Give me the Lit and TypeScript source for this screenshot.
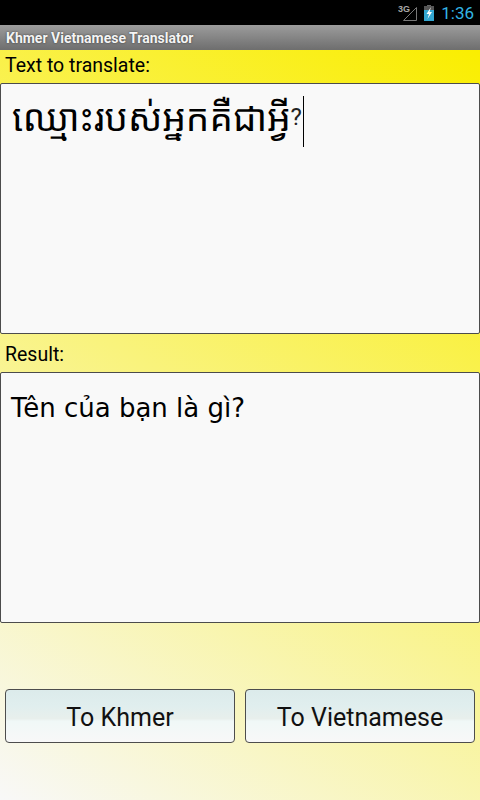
import { LitElement, html, css } from "lit";
import { customElement } from "lit/decorators.js";

@customElement("app-root")
export class AppRoot extends LitElement {
  static styles = css`
    :host {
      display: flex;
      flex-direction: column;
      width: 480px;
      height: 800px;
      overflow: hidden;
      font-family: Roboto, "Noto Sans", sans-serif;
      color: #000;
    }
    .status {
      height: 25px;
      flex: none;
      background: #000;
      display: flex;
      align-items: center;
      justify-content: flex-end;
      gap: 7px;
      padding-right: 6px;
      box-sizing: border-box;
      color: #33b5e5;
      font-size: 17px;
    }
    .status svg { display: block; }
    .title {
      height: 25px;
      flex: none;
      box-sizing: border-box;
      background: linear-gradient(#9c9c9c, #6e6e6e);
      color: #f4f4f4;
      font: bold 14px Roboto, sans-serif;
      text-shadow: 0 0 2px #333;
      display: flex;
      align-items: center;
      padding-left: 6px;
    }
    .main {
      flex: 1;
      display: flex;
      flex-direction: column;
      background: linear-gradient(212.6deg, #faee00 0%, #f8f8f8 100%);
    }
    .label {
      font-size: 19.5px;
      padding-left: 5px;
      height: 31px;
      padding-bottom: 2px;
      display: flex;
      align-items: center;
      flex: none;
    }
    .label.second { height: 38px; padding: 3px 0 0 5px; box-sizing: border-box; }
    .box {
      flex: none;
      height: 251px;
      box-sizing: border-box;
      background: #f9f9f9;
      border: 1px solid #4c4c4c;
      border-radius: 2px;
    }
    .box.source {
      font-family: "Khmer OS", "Noto Sans Khmer", "DejaVu Sans", serif;
      font-size: 37px;
      line-height: 50px;
      padding: 8px 11px;
      display: flex;
      align-items: flex-start;
    }
    .mark {
      font: 24px/50px Roboto, sans-serif;
      color: #222;
    }
    .box.result {
      font-family: "DejaVu Sans", sans-serif;
      font-size: 26px;
      line-height: 50px;
      padding: 10px 10px;
    }
    .caret {
      flex: none;
      width: 1px;
      height: 51px;
      background: #000;
      margin: 4px 0 0 1px;
    }
    .actions {
      display: flex;
      gap: 10px;
      padding: 66px 5px 0;
    }
    button {
      flex: 1;
      height: 54px;
      margin: 0;
      box-sizing: border-box;
      border: 1px solid #4d4d4d;
      border-radius: 4px;
      background: linear-gradient(#dcebeb 0%, #e0eeee 30%, #e8efec 55%, #f0f8f7 60%, #f8f8f8 100%);
      color: #111;
      font: 25px Roboto, sans-serif;
      padding: 3px 0 0;
    }
  `;

  render() {
    return html`
      <div class="status">
        <svg width="19" height="18" viewBox="0 0 19 18">
          <text x="0" y="8" fill="#a8a8a8" font-size="9" font-weight="700" font-family="Liberation Sans">3G</text>
          <path d="M5.5 16.5 L18.5 3.5 V16.5 Z" fill="none" stroke="#777" stroke-width="1" />
        </svg>
        <svg width="10" height="16" viewBox="0 0 10 16">
          <rect x="3" y="0" width="4" height="2" fill="#666" />
          <rect x="0" y="1" width="10" height="5" fill="#555" />
          <rect x="0" y="5" width="10" height="11" fill="#33a6d0" />
          <path d="M7 2 L2.5 9 H5 L3.5 14 L8 7 H5.5 Z" fill="#fff" />
        </svg>
        <span>1:36</span>
      </div>
      <div class="title">Khmer Vietnamese Translator</div>
      <div class="main">
        <div class="label">Text to translate:</div>
        <div class="box source"><span>ឈ្មោះរបស់អ្នកគឺជាអ្វី</span><span class="mark">?</span><span class="caret"></span></div>
        <div class="label second">Result:</div>
        <div class="box result">Tên của bạn là gì?</div>
        <div class="actions">
          <button>To Khmer</button>
          <button>To Vietnamese</button>
        </div>
      </div>
    `;
  }
}
